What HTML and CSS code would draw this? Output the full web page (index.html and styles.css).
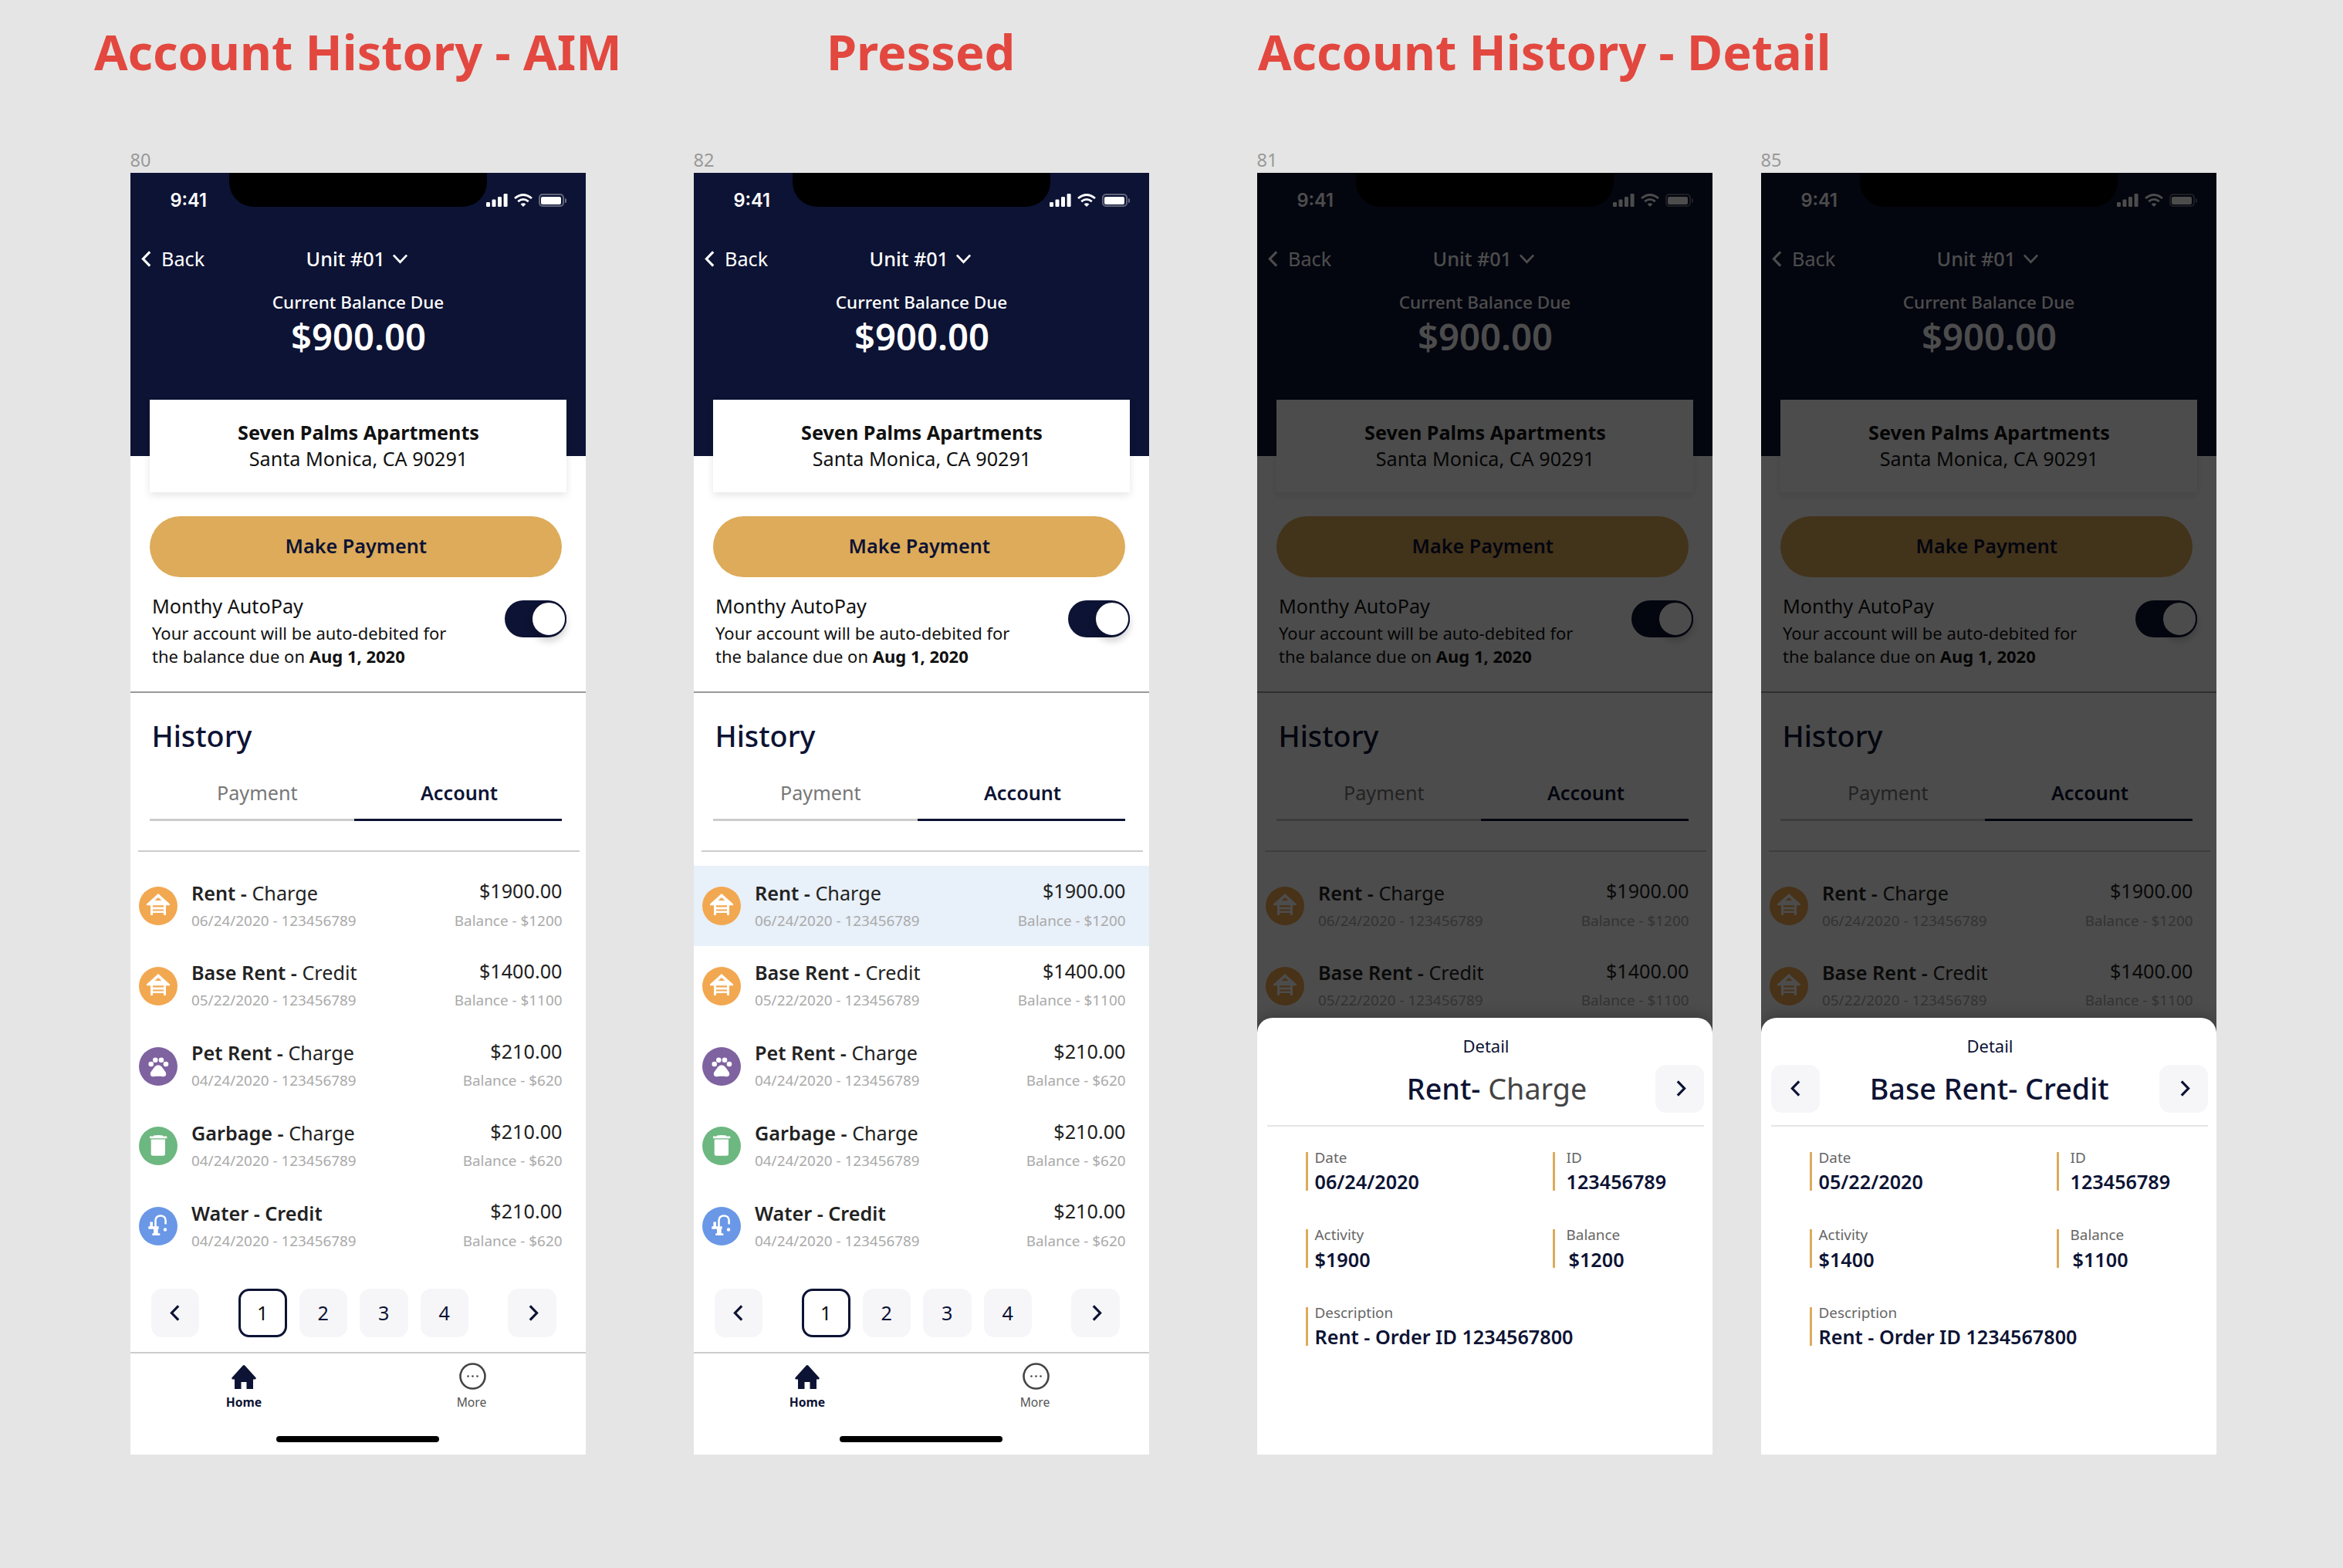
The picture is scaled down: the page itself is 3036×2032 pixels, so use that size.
FILE: index.html
```html
<!DOCTYPE html>
<html lang="en">
<head>
<meta charset="utf-8">
<title>Account History</title>
<link rel="stylesheet" href="styles.css">
</head>
<body>
<svg class="sprite" aria-hidden="true">
  <symbol id="i-house" viewBox="0 0 50 50">
    <path fill="#fff" fill-rule="evenodd" d="M25 9 40 22.6V24.2H35V37H32V34H18V37H15V24.2H10V22.6ZM25 14 20.6 18H29.4ZM18 24.2V26.6H32V24.2ZM18 29.6V31.4H32V29.6Z"/>
  </symbol>
  <symbol id="i-paw" viewBox="0 0 50 50">
    <g fill="#fff">
      <circle cx="15.7" cy="22" r="3.3"/><circle cx="21.3" cy="16.7" r="3.3"/><circle cx="29" cy="16.7" r="3.3"/><circle cx="35" cy="22" r="3.3"/>
      <path d="M25 23.3C28 23.3 30 25.6 31.8 28.6 33.4 31 35.4 32.6 35.2 35.2 35 37.6 33 38.4 31 38.2 27 37.6 23 37.6 19 38.2 17 38.4 15 37.6 14.8 35.2 14.6 32.6 16.6 31 18.2 28.6 20 25.6 22 23.3 25 23.3Z"/>
    </g>
  </symbol>
  <symbol id="i-trash" viewBox="0 0 50 50">
    <path fill="#fff" d="M19 11.6Q25 10.4 31 11.6V12.6H36.3V15.2H14V12.6H19ZM15.7 16.4H34V35.2Q34 37.7 31.5 37.7H18.2Q15.7 37.7 15.7 35.2Z"/>
  </symbol>
  <symbol id="i-tap" viewBox="0 0 50 50">
    <g fill="#fff">
      <path fill="none" stroke="#fff" stroke-width="2.6" d="M21.5 26V17.5C21.5 13.6 24.4 11.5 28 11.5S34.6 13.6 34.6 17.5V22.5"/>
      <circle cx="34" cy="29.5" r="2.2"/>
      <path d="M14.4 19.5H18V25.3H25.7V28.7H24.7V34.3H27.3V37H17.3V34.3H19V28.7H12.3V25.3H14.4Z"/>
    </g>
  </symbol>
  <symbol id="i-left" viewBox="0 0 13 21"><path fill="none" stroke="currentColor" stroke-width="3.2" d="M11.2 1.4 2.4 10.5 11.2 19.6"/></symbol>
  <symbol id="i-right" viewBox="0 0 13 21"><path fill="none" stroke="currentColor" stroke-width="3.2" d="M1.8 1.4 10.6 10.5 1.8 19.6"/></symbol>
  <symbol id="i-down" viewBox="0 0 20 13"><path fill="none" stroke="currentColor" stroke-width="2.8" d="M1.4 1.6 10 10.8 18.6 1.6"/></symbol>
  <symbol id="i-home" viewBox="0 0 32 31"><path fill="currentColor" d="M14.6.7Q16 -.5 17.4.7L31.4 16.2Q32.6 18.6 30 18.6H28V31H19.5V22H12.5V31H4V18.6H2Q-.6 18.6.6 16.2Z"/></symbol>
  <symbol id="i-more" viewBox="0 0 35 35"><circle cx="17.5" cy="17.5" r="16" fill="none" stroke="#444" stroke-width="2.6"/><g fill="#444"><circle cx="11.5" cy="17.5" r="1.3"/><circle cx="17.5" cy="17.5" r="1.3"/><circle cx="23.5" cy="17.5" r="1.3"/></g></symbol>
  <symbol id="i-signal" viewBox="0 0 28 17"><g fill="#fff"><rect x="0" y="11" width="5" height="6" rx="1.2"/><rect x="7.5" y="7.5" width="5" height="9.5" rx="1.2"/><rect x="15" y="4" width="5" height="13" rx="1.2"/><rect x="22.6" y="0" width="5" height="17" rx="1.2"/></g></symbol>
  <symbol id="i-wifi" viewBox="0 0 24 17"><g fill="none" stroke="#fff" stroke-width="2.8"><path d="M1 6Q12 -3 23 6"/><path d="M5.2 10.2Q12 4.6 18.8 10.2"/></g><path fill="#fff" d="M8.6 13.4Q12 11.2 15.4 13.4L12 17Z"/></symbol>
</svg>

<header class="titles">
  <h1 class="title">Account History - AIM</h1>
  <h1 class="title">Pressed</h1>
  <h1 class="title">Account History - Detail</h1>
</header>

<main class="frames">

  <section class="frame">
    <div class="frame-id">80</div>
    <div class="phone">
      <div class="notch"></div>
      <div class="top">
        <div class="status"><span class="time">9:41</span><span class="status-icons"><svg class="ic-signal"><use href="#i-signal"/></svg><svg class="ic-wifi"><use href="#i-wifi"/></svg><span class="battery"></span></span></div>
        <nav class="nav"><span class="back"><svg class="ic-back"><use href="#i-left"/></svg>Back</span><span class="unit">Unit #01<svg class="ic-down"><use href="#i-down"/></svg></span></nav>
        <p class="due-label">Current Balance Due</p>
        <p class="due-value">$900.00</p>
        <div class="place"><strong>Seven Palms Apartments</strong><span>Santa Monica, CA 90291</span></div>
      </div>
      <button class="pay">Make Payment</button>
      <div class="autopay">
        <div><p class="auto-title">Monthy AutoPay</p><p class="auto-text">Your account will be auto-debited for<br>the balance due on <b>Aug 1, 2020</b></p></div>
        <span class="toggle"><i></i></span>
      </div>
      <h2 class="history">History</h2>
      <div class="tabs"><span class="tab tab-off">Payment</span><span class="tab tab-on">Account</span></div>
      <div class="rule"></div>
      <ul class="rows">
        <li class="row"><span class="dot orange"><svg><use href="#i-house"/></svg></span><div class="row-main"><p class="row-title"><b>Rent -</b> Charge</p><p class="row-sub">06/24/2020 - 123456789</p></div><div class="row-side"><p class="row-amt">$1900.00</p><p class="row-sub">Balance - $1200</p></div></li>
        <li class="row"><span class="dot orange"><svg><use href="#i-house"/></svg></span><div class="row-main"><p class="row-title"><b>Base Rent -</b> Credit</p><p class="row-sub">05/22/2020 - 123456789</p></div><div class="row-side"><p class="row-amt">$1400.00</p><p class="row-sub">Balance - $1100</p></div></li>
        <li class="row"><span class="dot purple"><svg><use href="#i-paw"/></svg></span><div class="row-main"><p class="row-title"><b>Pet Rent -</b> Charge</p><p class="row-sub">04/24/2020 - 123456789</p></div><div class="row-side"><p class="row-amt">$210.00</p><p class="row-sub">Balance - $620</p></div></li>
        <li class="row"><span class="dot green"><svg><use href="#i-trash"/></svg></span><div class="row-main"><p class="row-title"><b>Garbage -</b> Charge</p><p class="row-sub">04/24/2020 - 123456789</p></div><div class="row-side"><p class="row-amt">$210.00</p><p class="row-sub">Balance - $620</p></div></li>
        <li class="row"><span class="dot blue"><svg><use href="#i-tap"/></svg></span><div class="row-main"><p class="row-title"><b>Water - Credit</b></p><p class="row-sub">04/24/2020 - 123456789</p></div><div class="row-side"><p class="row-amt">$210.00</p><p class="row-sub">Balance - $620</p></div></li>
      </ul>
      <div class="pager">
        <span class="pg"><svg class="ic-chev"><use href="#i-left"/></svg></span>
        <div class="pages"><span class="pg pg-on">1</span><span class="pg">2</span><span class="pg">3</span><span class="pg">4</span></div>
        <span class="pg"><svg class="ic-chev"><use href="#i-right"/></svg></span>
      </div>
      <div class="tabbar">
        <span class="bar-item bar-on"><svg class="ic-home"><use href="#i-home"/></svg>Home</span>
        <span class="bar-item"><svg class="ic-more"><use href="#i-more"/></svg>More</span>
      </div>
      <div class="indicator"></div>
    </div>
  </section>

  <section class="frame">
    <div class="frame-id">82</div>
    <div class="phone">
      <div class="notch"></div>
      <div class="top">
        <div class="status"><span class="time">9:41</span><span class="status-icons"><svg class="ic-signal"><use href="#i-signal"/></svg><svg class="ic-wifi"><use href="#i-wifi"/></svg><span class="battery"></span></span></div>
        <nav class="nav"><span class="back"><svg class="ic-back"><use href="#i-left"/></svg>Back</span><span class="unit">Unit #01<svg class="ic-down"><use href="#i-down"/></svg></span></nav>
        <p class="due-label">Current Balance Due</p>
        <p class="due-value">$900.00</p>
        <div class="place"><strong>Seven Palms Apartments</strong><span>Santa Monica, CA 90291</span></div>
      </div>
      <button class="pay">Make Payment</button>
      <div class="autopay">
        <div><p class="auto-title">Monthy AutoPay</p><p class="auto-text">Your account will be auto-debited for<br>the balance due on <b>Aug 1, 2020</b></p></div>
        <span class="toggle"><i></i></span>
      </div>
      <h2 class="history">History</h2>
      <div class="tabs"><span class="tab tab-off">Payment</span><span class="tab tab-on">Account</span></div>
      <div class="rule"></div>
      <ul class="rows">
        <li class="row row-pressed"><span class="dot orange"><svg><use href="#i-house"/></svg></span><div class="row-main"><p class="row-title"><b>Rent -</b> Charge</p><p class="row-sub">06/24/2020 - 123456789</p></div><div class="row-side"><p class="row-amt">$1900.00</p><p class="row-sub">Balance - $1200</p></div></li>
        <li class="row"><span class="dot orange"><svg><use href="#i-house"/></svg></span><div class="row-main"><p class="row-title"><b>Base Rent -</b> Credit</p><p class="row-sub">05/22/2020 - 123456789</p></div><div class="row-side"><p class="row-amt">$1400.00</p><p class="row-sub">Balance - $1100</p></div></li>
        <li class="row"><span class="dot purple"><svg><use href="#i-paw"/></svg></span><div class="row-main"><p class="row-title"><b>Pet Rent -</b> Charge</p><p class="row-sub">04/24/2020 - 123456789</p></div><div class="row-side"><p class="row-amt">$210.00</p><p class="row-sub">Balance - $620</p></div></li>
        <li class="row"><span class="dot green"><svg><use href="#i-trash"/></svg></span><div class="row-main"><p class="row-title"><b>Garbage -</b> Charge</p><p class="row-sub">04/24/2020 - 123456789</p></div><div class="row-side"><p class="row-amt">$210.00</p><p class="row-sub">Balance - $620</p></div></li>
        <li class="row"><span class="dot blue"><svg><use href="#i-tap"/></svg></span><div class="row-main"><p class="row-title"><b>Water - Credit</b></p><p class="row-sub">04/24/2020 - 123456789</p></div><div class="row-side"><p class="row-amt">$210.00</p><p class="row-sub">Balance - $620</p></div></li>
      </ul>
      <div class="pager">
        <span class="pg"><svg class="ic-chev"><use href="#i-left"/></svg></span>
        <div class="pages"><span class="pg pg-on">1</span><span class="pg">2</span><span class="pg">3</span><span class="pg">4</span></div>
        <span class="pg"><svg class="ic-chev"><use href="#i-right"/></svg></span>
      </div>
      <div class="tabbar">
        <span class="bar-item bar-on"><svg class="ic-home"><use href="#i-home"/></svg>Home</span>
        <span class="bar-item"><svg class="ic-more"><use href="#i-more"/></svg>More</span>
      </div>
      <div class="indicator"></div>
    </div>
  </section>

  <section class="frame">
    <div class="frame-id">81</div>
    <div class="phone">
      <div class="notch"></div>
      <div class="top">
        <div class="status"><span class="time">9:41</span><span class="status-icons"><svg class="ic-signal"><use href="#i-signal"/></svg><svg class="ic-wifi"><use href="#i-wifi"/></svg><span class="battery"></span></span></div>
        <nav class="nav"><span class="back"><svg class="ic-back"><use href="#i-left"/></svg>Back</span><span class="unit">Unit #01<svg class="ic-down"><use href="#i-down"/></svg></span></nav>
        <p class="due-label">Current Balance Due</p>
        <p class="due-value">$900.00</p>
        <div class="place"><strong>Seven Palms Apartments</strong><span>Santa Monica, CA 90291</span></div>
      </div>
      <button class="pay">Make Payment</button>
      <div class="autopay">
        <div><p class="auto-title">Monthy AutoPay</p><p class="auto-text">Your account will be auto-debited for<br>the balance due on <b>Aug 1, 2020</b></p></div>
        <span class="toggle"><i></i></span>
      </div>
      <h2 class="history">History</h2>
      <div class="tabs"><span class="tab tab-off">Payment</span><span class="tab tab-on">Account</span></div>
      <div class="rule"></div>
      <ul class="rows">
        <li class="row"><span class="dot orange"><svg><use href="#i-house"/></svg></span><div class="row-main"><p class="row-title"><b>Rent -</b> Charge</p><p class="row-sub">06/24/2020 - 123456789</p></div><div class="row-side"><p class="row-amt">$1900.00</p><p class="row-sub">Balance - $1200</p></div></li>
        <li class="row"><span class="dot orange"><svg><use href="#i-house"/></svg></span><div class="row-main"><p class="row-title"><b>Base Rent -</b> Credit</p><p class="row-sub">05/22/2020 - 123456789</p></div><div class="row-side"><p class="row-amt">$1400.00</p><p class="row-sub">Balance - $1100</p></div></li>
      </ul>
      <div class="scrim"></div>
      <div class="sheet">
        <p class="sheet-label">Detail</p>
        <div class="sheet-head sheet-head-first">
          <h3 class="sheet-title"><span>Rent-</span> <em>Charge</em></h3>
          <span class="pg pg-short"><svg class="ic-chev"><use href="#i-right"/></svg></span>
        </div>
        <dl class="fields">
          <div class="field"><dt>Date</dt><dd>06/24/2020</dd></div>
          <div class="field"><dt>ID</dt><dd>123456789</dd></div>
          <div class="field"><dt>Activity</dt><dd>$1900</dd></div>
          <div class="field"><dt>Balance</dt><dd class="nudge">$1200</dd></div>
          <div class="field field-wide"><dt>Description</dt><dd>Rent - Order ID 1234567800</dd></div>
        </dl>
      </div>
    </div>
  </section>

  <section class="frame frame-tight">
    <div class="frame-id">85</div>
    <div class="phone">
      <div class="notch"></div>
      <div class="top">
        <div class="status"><span class="time">9:41</span><span class="status-icons"><svg class="ic-signal"><use href="#i-signal"/></svg><svg class="ic-wifi"><use href="#i-wifi"/></svg><span class="battery"></span></span></div>
        <nav class="nav"><span class="back"><svg class="ic-back"><use href="#i-left"/></svg>Back</span><span class="unit">Unit #01<svg class="ic-down"><use href="#i-down"/></svg></span></nav>
        <p class="due-label">Current Balance Due</p>
        <p class="due-value">$900.00</p>
        <div class="place"><strong>Seven Palms Apartments</strong><span>Santa Monica, CA 90291</span></div>
      </div>
      <button class="pay">Make Payment</button>
      <div class="autopay">
        <div><p class="auto-title">Monthy AutoPay</p><p class="auto-text">Your account will be auto-debited for<br>the balance due on <b>Aug 1, 2020</b></p></div>
        <span class="toggle"><i></i></span>
      </div>
      <h2 class="history">History</h2>
      <div class="tabs"><span class="tab tab-off">Payment</span><span class="tab tab-on">Account</span></div>
      <div class="rule"></div>
      <ul class="rows">
        <li class="row"><span class="dot orange"><svg><use href="#i-house"/></svg></span><div class="row-main"><p class="row-title"><b>Rent -</b> Charge</p><p class="row-sub">06/24/2020 - 123456789</p></div><div class="row-side"><p class="row-amt">$1900.00</p><p class="row-sub">Balance - $1200</p></div></li>
        <li class="row"><span class="dot orange"><svg><use href="#i-house"/></svg></span><div class="row-main"><p class="row-title"><b>Base Rent -</b> Credit</p><p class="row-sub">05/22/2020 - 123456789</p></div><div class="row-side"><p class="row-amt">$1400.00</p><p class="row-sub">Balance - $1100</p></div></li>
      </ul>
      <div class="scrim"></div>
      <div class="sheet">
        <p class="sheet-label">Detail</p>
        <div class="sheet-head">
          <span class="pg pg-short"><svg class="ic-chev"><use href="#i-left"/></svg></span>
          <h3 class="sheet-title"><span>Base Rent- Credit</span></h3>
          <span class="pg pg-short"><svg class="ic-chev"><use href="#i-right"/></svg></span>
        </div>
        <dl class="fields">
          <div class="field"><dt>Date</dt><dd>05/22/2020</dd></div>
          <div class="field"><dt>ID</dt><dd>123456789</dd></div>
          <div class="field"><dt>Activity</dt><dd>$1400</dd></div>
          <div class="field"><dt>Balance</dt><dd class="nudge">$1100</dd></div>
          <div class="field field-wide"><dt>Description</dt><dd>Rent - Order ID 1234567800</dd></div>
        </dl>
      </div>
    </div>
  </section>

</main>
</body>
</html>
```
FILE: styles.css
```css
* { box-sizing: border-box; }
html, body { margin: 0; padding: 0; }
body {
  width: 3036px;
  height: 2032px;
  overflow: hidden;
  background: #e5e5e5;
  font-family: "Noto Sans", "Open Sans", sans-serif;
  color: #111;
}
p, h1, h2, h3, ul, dl, dd { margin: 0; padding: 0; }
ul { list-style: none; }
svg { display: block; }
.sprite { position: absolute; width: 0; height: 0; }

.titles {
  display: grid;
  grid-template-columns: 949px 559px auto;
  padding: 27px 0 0 122px;
  height: 191.5px;
}
.title {
  font-size: 63px;
  line-height: 80px;
  font-weight: 700;
  color: #e2483f;
  white-space: nowrap;
}

.frames { display: flex; gap: 140px; padding-left: 168.5px; }
.frame { width: 590px; flex: none; }
.frame-tight { margin-left: -77px; }
.frame-id { font-size: 23.6px; line-height: 30px; color: #999; margin-bottom: 2.5px; }

.phone {
  position: relative;
  width: 590px;
  height: 1661px;
  background: #fff;
  overflow: hidden;
}
.notch {
  position: absolute;
  top: 0;
  left: 128px;
  width: 334px;
  height: 44px;
  background: #000;
  border-radius: 0 0 32px 32px;
}

.top { background: #0d1334; color: #fff; height: 367px; padding-top: 27px; }
.status { display: flex; justify-content: space-between; align-items: center; height: 17px; padding: 0 28px 0 52px; }
.time { font-family: Inter, "Liberation Sans", sans-serif; font-size: 23.6px; font-weight: 600; line-height: 17px; }
.status-icons { display: flex; align-items: center; }
.ic-signal { width: 28px; height: 17px; }
.ic-wifi { width: 24px; height: 17px; margin-left: 8px; }
.battery {
  position: relative;
  width: 33px;
  height: 17px;
  margin-left: 8px;
  border: 2px solid rgba(255, 255, 255, .35);
  border-radius: 5px;
}
.battery::before { content: ""; position: absolute; inset: 1.5px; background: #fff; border-radius: 2px; }
.battery::after { content: ""; position: absolute; right: -5px; top: 3.5px; width: 2px; height: 6px; background: rgba(255, 255, 255, .4); border-radius: 0 2px 2px 0; }

.nav {
  display: grid;
  grid-template-columns: 1fr auto 1fr;
  align-items: center;
  margin-top: 50px;
  padding-left: 14.6px;
  font-size: 25.2px;
  line-height: 34px;
}
.back { display: flex; align-items: center; }
.ic-back { width: 13px; height: 21px; margin-right: 13px; color: #fff; }
.unit { display: flex; align-items: center; font-weight: 500; transform: translateX(-8.5px); }
.ic-down { width: 20px; height: 13px; margin-left: 9px; color: #fff; }

.due-label { margin-top: 25px; padding-left: 1px; font-size: 22.5px; line-height: 30px; font-weight: 500; text-align: center; }
.due-value { margin-top: 2.5px; padding-left: 2px; font-size: 47.2px; line-height: 52px; font-weight: 600; text-align: center; }

.place {
  display: flex;
  flex-direction: column;
  align-items: center;
  width: 540px;
  height: 120px;
  margin: 56.2px 0 0 25px;
  padding: 25px 0 0 2px;
  background: #fff;
  color: #111;
  font-size: 25.2px;
  line-height: 34px;
  box-shadow: 0 4px 10px rgba(0, 0, 0, .1);
}
.place strong { font-weight: 700; }

.pay {
  display: block;
  width: 534.4px;
  height: 79px;
  margin: 78px 0 0 25.6px;
  padding: 0 0 3px;
  border: 0;
  border-radius: 40px;
  background: #ddab5a;
  color: #0d1334;
  font: 600 25.2px/34px "Noto Sans", sans-serif;
}

.autopay { display: flex; justify-content: space-between; align-items: flex-start; margin-top: 20px; padding: 0 25px 31.5px 28.5px; border-bottom: 2px solid #999; }
.auto-title { font-size: 25.2px; line-height: 34px; }
.auto-text { margin-top: 2.8px; font-size: 22px; line-height: 30px; }
.auto-text b { font-weight: 700; }
.toggle { position: relative; width: 80px; height: 48px; margin-top: 10px; border-radius: 24px; background: #0d1334; }
.toggle i { position: absolute; right: 0; top: 1px; width: 46px; height: 46px; border-radius: 50%; background: #fff; border: 2px solid #0d1334; box-shadow: 0 6px 10px rgba(0, 0, 0, .18); }

.history { margin-top: 30.4px; padding-left: 28px; font-size: 37.7px; line-height: 50px; font-weight: 500; color: #0d1334; }

.tabs { display: grid; grid-template-columns: 265.4px 269px; margin: 31.8px 0 0 25.6px; }
.tab { padding-bottom: 17px; font-size: 25.2px; line-height: 34px; text-align: center; border-bottom: 3px solid; }
.tab-off { padding-left: 13px; color: #777; border-color: #ccc; }
.tab-on { padding-left: 2px; color: #0d1334; font-weight: 600; border-color: #0d1334; }

.rule { height: 2px; margin: 38px 8px 0 10px; background: #ccc; }

.rows { margin-top: 17.5px; }
.row { display: flex; align-items: flex-start; height: 103.8px; padding: 0 30px 0 11px; }
.row-pressed { background: #e8f0f9; }
.dot { flex: none; width: 50px; height: 50px; margin: 27px 18.5px 0 0; border-radius: 50%; }
.dot svg { width: 50px; height: 50px; }
.orange { background: #f2a851; }
.purple { background: #7f62a0; }
.green { background: #6db780; }
.blue { background: #6a97e6; }
.row-main { flex: 1; padding-top: 17.7px; }
.row-side { padding-top: 15.2px; text-align: right; }
.row-title { font-size: 25.2px; line-height: 34px; color: #222; }
.row-title b { font-weight: 600; }
.row-amt { font-size: 25.2px; line-height: 34px; color: #222; }
.row-sub { font-size: 18.9px; line-height: 26px; color: #aaa; }
.row-main .row-sub { margin-top: 6px; }
.row-side .row-sub { margin-top: 8.5px; }

.pager { display: flex; justify-content: space-between; margin-top: 29px; padding: 0 38px 0 27px; }
.pages { display: flex; gap: 16px; }
.pg {
  display: flex;
  align-items: center;
  justify-content: center;
  flex: none;
  width: 62.5px;
  height: 63px;
  border-radius: 14px;
  background: #f6f6f9;
  color: #0d1334;
  font-size: 25.2px;
}
.pg-on { background: #fff; border: 3px solid #0d1334; color: #111; }
.pg-short { height: 62px; }
.ic-chev { width: 13px; height: 21px; color: #0d1334; }
.pager > .pg:last-child .ic-chev, .sheet-head > .pg:last-child .ic-chev { transform: translateX(2px); }

.tabbar { display: grid; grid-template-columns: 1fr 1fr; margin-top: 19px; padding-top: 12px; border-top: 2px solid #ccc; }
.bar-item { display: flex; flex-direction: column; align-items: center; font-size: 15.7px; line-height: 22px; color: #555; }
.bar-on { color: #0d1334; font-weight: 700; }
.ic-home { width: 32px; height: 31px; margin: 3px 0 6px; color: #0d1334; }
.ic-more { width: 35px; height: 35px; margin-bottom: 5px; transform: translateX(1px); }
.indicator { width: 211px; height: 8px; margin: 33px auto 0; border-radius: 4px; background: #000; }

.scrim { position: absolute; inset: 0; background: rgba(0, 0, 0, .7); }
.sheet {
  position: absolute;
  left: 0;
  right: 0;
  top: 1095px;
  bottom: 0;
  padding-top: 21px;
  background: #fff;
  border-radius: 20px 20px 0 0;
  box-shadow: 0 -4px 16px rgba(0, 0, 0, .2);
}
.sheet-label { padding-left: 4px; font-size: 22px; line-height: 30px; color: #0d1334; text-align: center; }
.sheet-head { display: flex; align-items: center; margin: 9.5px 11px 0 13.5px; padding-bottom: 16px; border-bottom: 2px solid #e5e5e5; }
.sheet-title { flex: 1; font-size: 37.7px; line-height: 50px; font-weight: 500; text-align: center; color: #0d1334; }
.sheet-title em { font-style: normal; font-weight: 400; color: #444; }
.sheet-head-first .sheet-title { padding-left: 92px; }

.fields { display: grid; grid-template-columns: 320px 1fr; row-gap: 50.5px; margin-top: 33px; padding-left: 63px; }
.field { height: 50px; padding-left: 9px; border-left: 3.5px solid #ddab5a; }
.field:nth-child(even) { padding-left: 15px; }
.field-wide { grid-column: 1 / -1; }
.field dt { margin-top: -3px; font-size: 18.9px; line-height: 20px; color: #666; }
.field dd { margin-top: 6.5px; font-size: 25.2px; line-height: 30px; font-weight: 600; color: #0d1334; }
.field .nudge { padding-left: 3px; }
```
